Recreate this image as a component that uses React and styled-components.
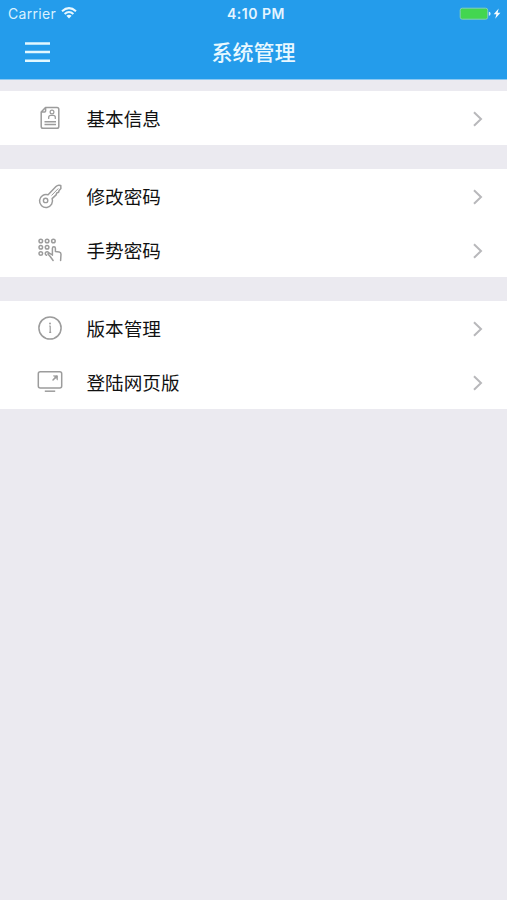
import React from "react";
import styled, { createGlobalStyle } from "styled-components";

const GlobalStyle = createGlobalStyle`
  * { box-sizing: border-box; }
  body {
    margin: 0;
    background: #ebeaf0;
    font-family: Inter, "Noto Sans CJK SC", sans-serif;
  }
`;

const Screen = styled.div`
  min-height: 900px;
  background: #ebeaf0;
`;

const Header = styled.header`
  height: 80px;
  background: #249ceb;
  border-bottom: 1px solid #8dc9f2;
  color: #fff;
`;

const StatusBar = styled.div`
  display: grid;
  grid-template-columns: 1fr auto 1fr;
  align-items: center;
  height: 27px;
  padding: 0 5px 0 8px;
`;

const Carrier = styled.div`
  display: flex;
  align-items: center;
  gap: 5px;
  font-size: 14px;
  letter-spacing: 0.3px;
  color: #d9f1ff;

  svg {
    margin-bottom: 1px;
  }
`;

const Clock = styled.div`
  font-size: 14px;
  font-weight: 600;
  letter-spacing: 0.5px;
  color: #e4f5ff;
  padding-left: 2px;
`;

const Power = styled.div`
  display: flex;
  justify-content: flex-end;
`;

const NavBar = styled.div`
  display: grid;
  grid-template-columns: 60px 1fr 60px;
  align-items: center;
  height: 50px;
`;

const MenuButton = styled.button`
  display: block;
  width: 50px;
  height: 22px;
  padding: 0 0 0 25px;
  border: 0;
  background: none;

  svg {
    display: block;
  }
`;

const Title = styled.h1`
  margin: 0 0 2px;
  font: 500 21px/30px "Noto Sans CJK SC", sans-serif;
  text-align: center;
  color: #e9f8ff;
`;

const Groups = styled.main`
  display: flex;
  flex-direction: column;
  gap: 24px;
  padding-top: 11px;
`;

const Group = styled.section`
  background: #fff;
`;

const Row = styled.div`
  display: flex;
  align-items: center;
  height: 54px;
  padding: 0 23px 0 36px;
`;

const RowIcon = styled.svg`
  width: 28px;
  height: 28px;
  margin-right: 22.5px;
  fill: none;
  stroke: #9c9c9c;
  stroke-width: 1.5;
  stroke-linecap: round;
  stroke-linejoin: round;
`;

const Label = styled.span`
  flex: 1;
  font: 400 18.6px/28px "Noto Sans CJK SC", sans-serif;
  color: #111;
`;

const Chevron = styled.svg`
  width: 12px;
  height: 18px;
  margin-top: 2px;
  fill: none;
  stroke: #b8b8bb;
  stroke-width: 2;
`;

const icons = {
  profile: (
    <>
      <path d="M9.5 3.5H21a1.8 1.8 0 0 1 1.8 1.8v17.2a1.8 1.8 0 0 1-1.8 1.8H7a1.8 1.8 0 0 1-1.8-1.8V8zM5.4 8h3.2q1 0 1-1V3.8" />
      <circle cx="16" cy="8" r="1.9" strokeWidth="1.2" />
      <path d="M12.7 14.4v-1c0-1.2 1-2 2.2-2h2.2c1.2 0 2.2.8 2.2 2v1" strokeWidth="1.3" />
      <path d="M8.5 17.7h11.5M8.5 20.5h11.5" strokeWidth="1.4" strokeLinecap="butt" />
    </>
  ),
  key: (
    <>
      <path d="M12.1 12.8 20 4.6Q21.4 3.1 23 3.2L24.8 3.5 24.9 6.5 23.1 8.4 22.6 10.3 20.7 11 20.1 12.9 16.1 16.6A6.5 6.5 0 1 1 12.1 12.8Z" />
      <path d="M15.8 13.2 22 6.8" strokeWidth="1" />
      <circle cx="9.6" cy="18.4" r="2.2" strokeWidth="1.4" />
    </>
  ),
  gesture: (
    <>
      <g strokeWidth="1.5">
        <circle cx="4.8" cy="5" r="1.8" />
        <circle cx="11.1" cy="5" r="1.8" />
        <circle cx="17.4" cy="5" r="1.8" />
        <circle cx="4.8" cy="11.2" r="1.8" />
        <circle cx="11.1" cy="11.2" r="1.8" />
        <circle cx="4.8" cy="17.5" r="1.8" />
        <path d="M10.5 19.2a1.8 1.8 0 1 1 2.2-2.5" />
      </g>
      <path d="M16.4 19.2v-7q0-1.5 1.5-1.5t1.5 1.5v3.4l3.8.5q1.8.3 1.8 2.2l-.4 6.2M16.4 18.9l-2.7-1.6q-1.2-.4-1.7.6l2.4 2.9 2.7 3.7" strokeWidth="1.5" />
    </>
  ),
  info: (
    <>
      <circle cx="14" cy="14" r="11.1" />
      <path d="M13.2 12H14.2v6.5M13.2 18.4h2" strokeWidth="1.2" strokeLinecap="butt" />
      <circle cx="14" cy="9.5" r=".95" fill="#9c9c9c" stroke="none" />
    </>
  ),
  monitor: (
    <>
      <rect x="2.3" y="3.8" width="23.4" height="16.2" rx="2" />
      <path d="M8.8 23.2h10.4" strokeLinecap="butt" />
      <path d="m17 12 3.6-3.6" strokeWidth="1.5" />
      <path d="M17.7 7.8h3.8v3.8z" fill="#9c9c9c" strokeWidth=".7" />
    </>
  ),
};

const groups = [
  [{ icon: "profile", label: "基本信息" }],
  [
    { icon: "key", label: "修改密码" },
    { icon: "gesture", label: "手势密码" },
  ],
  [
    { icon: "info", label: "版本管理" },
    { icon: "monitor", label: "登陆网页版" },
  ],
];

export default function App() {
  return (
    <Screen>
      <GlobalStyle />
      <Header>
        <StatusBar>
          <Carrier>
            Carrier
            <svg width="16" height="12" viewBox="0 0 16 12" fill="none" stroke="#e8f8ff" strokeWidth="2">
              <path d="M1 4.2Q8-2 15 4.2M3.6 7Q8 3.1 12.4 7" />
              <path d="m5.4 8.8 2.6 2.7 2.6-2.7Q8 6.8 5.4 8.8Z" fill="#e8f8ff" stroke="none" />
            </svg>
          </Carrier>
          <Clock>4:10 PM</Clock>
          <Power>
            <svg width="43" height="14" viewBox="0 0 43 14">
              <rect x="1.2" y="1.2" width="27.5" height="11" rx="2" fill="#43d650" stroke="#82cfb5" />
              <path d="M29.8 4.7q1.8 0 1.8 2t-1.8 2z" fill="#d5f1ff" />
              <path d="m39.7 1.5-5 5.8h2.7l-1.2 4.5 5.2-6h-2.8z" fill="#f4fcff" />
            </svg>
          </Power>
        </StatusBar>
        <NavBar>
          <MenuButton aria-label="菜单">
            <svg width="25" height="22" viewBox="0 0 25 22" stroke="#e2f8ff" strokeWidth="2.5">
              <path d="M0 2.4h25M0 11.1h25M0 19.7h25" />
            </svg>
          </MenuButton>
          <Title>系统管理</Title>
        </NavBar>
      </Header>
      <Groups>
        {groups.map((rows) => (
          <Group key={rows[0].icon}>
            {rows.map(({ icon, label }) => (
              <Row key={icon}>
                <RowIcon viewBox="0 0 28 28">{icons[icon]}</RowIcon>
                <Label>{label}</Label>
                <Chevron viewBox="0 0 12 18">
                  <path d="m2 2.2 7 6.8-7 6.8" />
                </Chevron>
              </Row>
            ))}
          </Group>
        ))}
      </Groups>
    </Screen>
  );
}
